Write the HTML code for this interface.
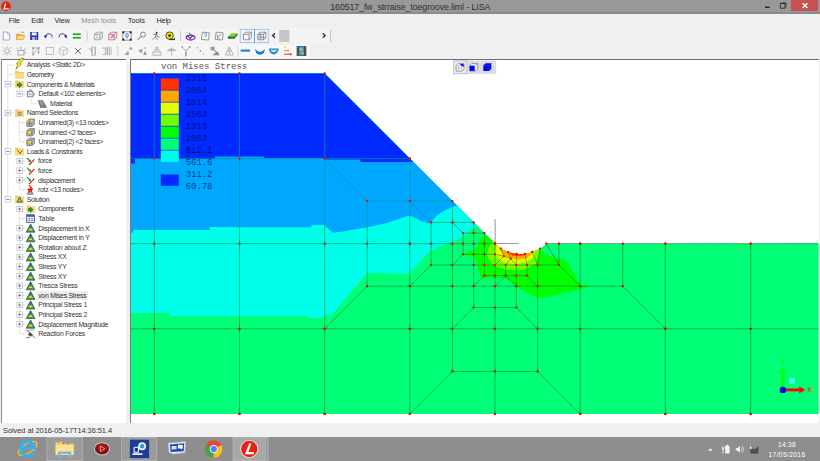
<!DOCTYPE html>
<html lang="en"><head><meta charset="utf-8"><title>160517_fw_strraise_toegroove.liml - LISA</title>
<style>
html,body{margin:0;padding:0}
body{width:820px;height:461px;overflow:hidden;position:relative;background:#f0f0f0;font-family:"Liberation Sans",sans-serif}
.t{position:absolute;white-space:pre}
.a{position:absolute}
#title{left:0;top:0;width:820px;height:13.7px;background:linear-gradient(#999 0,#999 12px,#8b8b8b 12.2px,#8b8b8b 100%)}
#close{left:791.4px;top:0;width:26.8px;height:11.2px;background:#c75050}
#tree{left:1px;top:59.4px;width:125.4px;height:363.4px;background:#fff;border-left:1px solid #8c8c8c;border-top:1px solid #6e6e6e;box-sizing:border-box}
#view{left:129.8px;top:59.2px;width:689.2px;height:363.6px;background:#fff;border-left:1px solid #7a7a7a;border-top:1px solid #6e6e6e;box-sizing:border-box}
#task{left:0;top:437px;width:820px;height:24px;background:#8e8e8e}
</style></head>
<body>
<div id="title" class="a"></div>
<div id="close" class="a"></div>
<div id="tree" class="a"></div>
<div id="view" class="a"></div>
<div id="task" class="a"></div>
<div class="a" style="left:0;top:29.3px;width:330px;height:13.8px;background:#f4f4f4;border-radius:0 2px 2px 0"></div>
<div class="a" style="left:0;top:44.2px;width:237px;height:14px;background:#f5f5f5;border-radius:0 2px 2px 0"></div>
<svg width="820" height="461" viewBox="0 0 820 461" style="position:absolute;left:0;top:0"><rect x="36.6" y="290.8" width="51" height="9.2" fill="#ececec"/></svg>
<svg width="820" height="461" viewBox="0 0 820 461" style="position:absolute;left:0;top:0"><g transform="translate(767.3 7.2)"><rect x="-2.3" y="-0.7" width="4.6" height="1.5" fill="#222"/></g>
<g transform="translate(783.0 5.5)"><rect x="-2.7" y="-1.9" width="4.6" height="4.6" fill="#999" stroke="#333" stroke-width="0.9"/><rect x="-1.6" y="-3" width="4.6" height="1.3" fill="#333"/><path d="M3 -2.4V1.6H2" stroke="#333" stroke-width="0.8" fill="none"/></g>
<g transform="translate(805.0 5.6)"><path d="M-2.4 -2.4L2.4 2.4M2.4 -2.4L-2.4 2.4" stroke="#fff" stroke-width="1.5" fill="none"/></g>
<g transform="translate(6.0 6.3)"><circle r="4.8" fill="#ee1c08"/><path d="M-0.4 -2.8L-1.9 2.6H2.8" stroke="#fff" stroke-width="1.3" fill="none"/></g>
<g transform="translate(6.4 36.0)"><path d="M-3.2 -4H1.2L3.3 -1.8V4H-3.2Z" fill="#fdfdff" stroke="#8a94b8" stroke-width="0.8"/><path d="M1.2 -4V-1.8H3.3" fill="#d8e0f4" stroke="#8a94b8" stroke-width="0.6"/></g>
<g transform="translate(20.4 36.0)"><path d="M-4.3 -2.6H-1.2L-0.2 -1.6H3V3.6H-4.3Z" fill="#e8b040"/><path d="M-4.3 3.6L-2.6 -0.6H4.6L3 3.6Z" fill="#ffd870" stroke="#c89020" stroke-width="0.5"/><path d="M0.5 -3.6Q2.8 -4.8 4 -3" stroke="#666" stroke-width="0.6" fill="none"/></g>
<g transform="translate(34.2 36.0)"><rect x="-4" y="-4" width="8" height="8" fill="#2434c0"/><rect x="-2.4" y="-3.6" width="4.8" height="3" fill="#f4f4ff"/><rect x="-2" y="1" width="4.4" height="3" fill="#c0c4d8"/><rect x="0.6" y="1.5" width="1.2" height="2" fill="#202870"/></g>
<g transform="translate(48.8 36.0)"><path d="M-3.6 1.2Q-3 -2.6 0.4 -2.4Q3.4 -2 3.6 1.4" stroke="#1a2a9a" stroke-width="0.85" fill="none"/><path d="M-4.6 -0.8L-1.4 -0.2L-3.8 2.6Z" fill="#1a2a9a"/></g>
<g transform="translate(62.5 36.0)"><path d="M3.6 1.2Q3 -2.6 -0.4 -2.4Q-3.4 -2 -3.6 1.4" stroke="#1a2a9a" stroke-width="0.85" fill="none"/><path d="M4.6 -0.8L1.4 -0.2L3.8 2.6Z" fill="#1a2a9a"/></g>
<g transform="translate(76.8 36.0)"><rect x="-4" y="-2.6" width="8" height="1.7" fill="#18a818"/><rect x="-4" y="0.9" width="8" height="1.7" fill="#18a818"/></g>
<g transform="translate(87.2 36.0)"><rect x="-0.4" y="-5" width="0.8" height="10" fill="#c4c4c4"/></g>
<g transform="translate(98.4 36.0)"><path d="M-4 -1.6L-1.6 -3.8H4V1.6L1.6 3.8H-4ZM-4 -1.6H1.6V3.8M1.6 -1.6L4 -3.8" stroke="#8a8a8a" stroke-width="0.7" fill="none"/><path d="M-1.6 -3.8V1.6H4M-1.6 1.6L-4 3.8" stroke="#a0a0a0" stroke-width="0.5" fill="none"/></g>
<g transform="translate(112.7 36.0)"><path d="M-4 -1.6L-1.6 -3.8H4V1.6L1.6 3.8H-4ZM-4 -1.6H1.6V3.8M1.6 -1.6L4 -3.8" stroke="#d05050" stroke-width="0.7" fill="none"/><path d="M-1.6 -3.8V1.6H4M-1.6 1.6L-4 3.8" stroke="#e08080" stroke-width="0.5" fill="none"/><path d="M-1.2 1.4L1 -1" stroke="#2040e0" stroke-width="1"/></g>
<g transform="translate(127.0 36.0)"><rect x="-4.1" y="-4.1" width="8.2" height="8.2" fill="#fff" stroke="#555" stroke-width="0.6"/><rect x="-4.6" y="-4.6" width="1.9" height="1.9" fill="#111"/><rect x="2.7" y="-4.6" width="1.9" height="1.9" fill="#111"/><rect x="-4.6" y="2.7" width="1.9" height="1.9" fill="#111"/><rect x="2.7" y="2.7" width="1.9" height="1.9" fill="#111"/><circle cx="0" cy="-0.8" r="1.6" fill="#c8d8ff" stroke="#4060d0" stroke-width="0.7"/><path d="M0 0.8V3" stroke="#4060d0" stroke-width="0.8"/></g>
<g transform="translate(141.8 36.0)"><circle cx="1.2" cy="-1.4" r="2.5" fill="#f8f8f8" stroke="#555" stroke-width="0.7"/><path d="M-0.6 0.4L-4 3.8" stroke="#555" stroke-width="1"/></g>
<g transform="translate(156.0 36.0)"><circle cx="0.6" cy="-3.2" r="1" fill="#333"/><path d="M-2.6 -1.4L0.4 -1.8L1.4 0.6L3.6 1.2M0.4 -1.8L-0.6 1L1.6 3.8M-0.6 1L-3.4 3.6" stroke="#444" stroke-width="0.65" fill="none"/></g>
<g transform="translate(170.0 36.0)"><circle cx="-0.4" cy="-0.4" r="3.7" fill="#f4e800" stroke="#222" stroke-width="0.8"/><circle cx="-0.4" cy="-0.4" r="1.3" fill="#222"/><path d="M-1 3.6H4.4V2" stroke="#222" stroke-width="1" fill="none"/></g>
<g transform="translate(180.6 36.0)"><rect x="-0.4" y="-5" width="0.8" height="10" fill="#c4c4c4"/></g>
<g transform="translate(190.6 36.0)"><ellipse cx="0" cy="1.6" rx="4.4" ry="2.4" fill="none" stroke="#8030b0" stroke-width="1.3"/><path d="M-3.6 -1L-0.6 2.4L2.4 -0.6" stroke="#6020a0" stroke-width="1.1" fill="none"/><path d="M-2 -3.8L1.4 -1.2L-0.4 -0.2Z" fill="#20a020"/></g>
<g transform="translate(205.3 36.0)"><path d="M-3 -3.8L4 -3.2L3.2 4L-4 3.4Z" fill="#fcfcfc" stroke="#707070" stroke-width="0.7"/><path d="M-1 -1.8Q0.4 -2.8 1.2 -1.6Q1.2 -0.4 0 0.4V1.2" stroke="#3050d0" stroke-width="0.8" fill="none"/></g>
<g transform="translate(219.2 36.0)"><path d="M-3 -3.8L4 -3.2L3.2 4L-4 3.4Z" fill="#fcfcfc" stroke="#707070" stroke-width="0.7"/><path d="M-2 1.6L0 -0.4L2.4 -1.6" stroke="#e04040" stroke-width="0.7" fill="none"/><path d="M-1.6 -2V2" stroke="#30a0d0" stroke-width="0.7"/><path d="M-2.4 2H1" stroke="#30b040" stroke-width="0.7"/></g>
<g transform="translate(232.7 36.0)"><path d="M-4.8 0.6L-1.4 -2.8H4.8L1.6 0.6Z" fill="#80d820"/><path d="M-4.8 0.6H1.6L4.8 -2.8V-0.8L1.6 2.8H-4.8Z" fill="#1c7a14"/></g>
<rect x="240.2" y="29.4" width="28.6" height="13" fill="#f2f5fa" stroke="#8ab8f4" stroke-width="0.8"/><rect x="254" y="29.4" width="0.8" height="13" fill="#3a8cf0"/>
<g transform="translate(247.4 36.0)"><path d="M-4 -1.6L-1.6 -3.8H4V1.6L1.6 3.8H-4ZM-4 -1.6H1.6V3.8M1.6 -1.6L4 -3.8" stroke="#6a6a6a" stroke-width="0.7" fill="none"/></g>
<g transform="translate(261.8 36.0)"><path d="M-4 -1.6L-1.6 -3.8H4V1.6L1.6 3.8H-4ZM-4 -1.6H1.6V3.8M1.6 -1.6L4 -3.8" stroke="#6a6a6a" stroke-width="0.7" fill="none"/><path d="M-1.6 -3.8V1.6H4M-1.6 1.6L-4 3.8M-1.2 -1.6V3.8M-4 1H1.6" stroke="#777" stroke-width="0.5" fill="none"/></g>
<rect x="269.4" y="29.6" width="60.4" height="12.8" fill="#f3f3f3"/>
<g transform="translate(273.8 35.6)"><path d="M1.2 -2.2L-1.2 0L1.2 2.2" stroke="#222" stroke-width="1.3" fill="none"/></g>
<rect x="279.1" y="30" width="10.2" height="11.9" fill="#c6c6c6"/>
<g transform="translate(324.0 35.6)"><path d="M-1.2 -2.2L1.2 0L-1.2 2.2" stroke="#333" stroke-width="1.3" fill="none"/></g>
<g transform="translate(330.4 36.0)"><rect x="-0.4" y="-6" width="0.8" height="12" fill="#bdbdbd"/></g>
<g transform="translate(7.0 51.0)"><path d="M-4 -4L4 4M4 -4L-4 4M0 -4.6V4.6M-4.6 0H4.6" stroke="#9a9a9a" stroke-width="0.7"/><circle r="1.3" fill="#f0f0f0"/></g>
<g transform="translate(21.6 51.0)"><rect x="-3.6" y="-0.6" width="6" height="4.6" fill="none" stroke="#9a9a9a" stroke-width="0.8"/><path d="M-0.6 -1V-4.6M2.6 -1L4.6 -3.4M-3.6 -1L-4.6 -3.4M3 1.6H4.8" stroke="#9a9a9a" stroke-width="0.7"/></g>
<g transform="translate(35.8 51.0)"><path d="M-2.8 -3V3.4M2.8 -3V1M-2.8 -3H2.8M2.8 -3L-2.4 3" stroke="#9a9a9a" stroke-width="0.7" fill="none"/><circle cx="-2.8" cy="-3" r="1" fill="#9a9a9a"/><circle cx="2.8" cy="-3" r="1" fill="#9a9a9a"/><circle cx="-2.8" cy="3.4" r="1" fill="#9a9a9a"/><circle cx="2.8" cy="1.6" r="1" fill="#9a9a9a"/></g>
<g transform="translate(49.8 51.0)"><rect x="-3.6" y="-3.6" width="7.2" height="7.2" fill="none" stroke="#b4b4b4" stroke-width="0.8"/></g>
<g transform="translate(63.4 51.0)"><path d="M0 -4.4L4 -2.2V2.2L0 4.4L-4 2.2V-2.2ZM-4 -2.2L0 0L4 -2.2M0 0V4.4" stroke="#b0b0b0" stroke-width="0.7" fill="none"/></g>
<g transform="translate(78.0 51.0)"><path d="M-2.8 -2.8L2.8 2.8M2.8 -2.8L-2.8 2.8" stroke="#606060" stroke-width="0.9"/></g>
<g transform="translate(92.6 51.0)"><path d="M-4 -3L-0.6 0.4M-0.6 -4V4.4M2.6 -4V4.4" stroke="#9a9a9a" stroke-width="0.8"/><rect x="-0.6" y="-4" width="3.2" height="8.4" fill="none" stroke="#a8a8a8" stroke-width="0.6"/></g>
<g transform="translate(107.0 51.0)"><path d="M-4.4 -3H-1.4V3.6H-4" stroke="#9a9a9a" stroke-width="0.8" fill="none"/><rect x="-0.2" y="-4.2" width="1.4" height="8.4" fill="#a8a8a8"/><rect x="2" y="-4.2" width="1.2" height="8.4" fill="#b8b8b8"/><rect x="3.8" y="-4.2" width="0.9" height="8.4" fill="#c4c4c4"/></g>
<g transform="translate(117.8 51.0)"><rect x="-0.4" y="-5" width="0.8" height="10" fill="#c4c4c4"/></g>
<g transform="translate(128.3 51.0)"><path d="M-4 4L0 -0.6L0.6 4Z" fill="#a0a0a0"/><path d="M0.4 -1.6L2.6 -4.6L4.4 -1.6Z" fill="#9a9a9a"/></g>
<g transform="translate(142.6 51.0)"><path d="M-4.4 -0.6L0 -2.6L-1 2.4Z" fill="#a0a0a0"/><path d="M0.6 4L2.4 -0.6L4.2 4Z" fill="#9a9a9a"/><rect x="2" y="-4" width="0.9" height="2" fill="#9a9a9a"/></g>
<g transform="translate(157.0 51.0)"><path d="M-4 1H4V4.2H-4ZM-2 1V-1.4H2V1M-0.8 -1.4V-4H0.8V-1.4" stroke="#a4a4a4" stroke-width="0.8" fill="none"/></g>
<g transform="translate(171.6 51.0)"><path d="M-4.6 -0.4Q0 -4.6 4.6 -0.4Q0 -1.6 -4.6 -0.4Z" fill="#b0b0b0"/><path d="M0 -3.4V4.4M-4.6 -0.4H4.6" stroke="#a8a8a8" stroke-width="0.7"/></g>
<g transform="translate(186.0 51.0)"><path d="M-3.8 -4L0 0L3.8 -4M0 0V4.4" stroke="#9a9a9a" stroke-width="0.8" fill="none"/><circle cx="-3.8" cy="-4" r="0.9" fill="#9a9a9a"/><circle cx="3.8" cy="-4" r="0.9" fill="#9a9a9a"/><circle cx="0" cy="2.2" r="0.9" fill="#9a9a9a"/><circle cx="0" cy="4.4" r="0.9" fill="#9a9a9a"/></g>
<g transform="translate(200.4 51.0)"><circle cx="-3" cy="-3.2" r="0.8" fill="#a0a0a0"/><circle cx="0" cy="0" r="0.9" fill="#a0a0a0"/><circle cx="3" cy="3" r="0.8" fill="#b0b0b0"/><circle cx="-0.4" cy="-3" r="0.5" fill="#c0c0c0"/></g>
<g transform="translate(215.0 51.0)"><rect x="-4.4" y="-4.2" width="4" height="3.6" fill="#9a9a9a"/><path d="M-2 -2L2 2" stroke="#777" stroke-width="1"/><path d="M-2.6 4.2L2.6 0L4.6 4.2Z" fill="#8a8a8a"/></g>
<g transform="translate(229.3 51.0)"><path d="M0 -4.2L4 4H-4ZM-2 0H2M0 -4.2V4" stroke="#a0a0a0" stroke-width="0.7" fill="none"/></g>
<rect x="238.4" y="44.4" width="71.6" height="14" rx="1.5" fill="#f7f7f7"/><rect x="237.6" y="46" width="0.8" height="10" fill="#d0d0d0"/>
<g transform="translate(245.3 50.6)"><rect x="-4.7" y="-1.1" width="9.4" height="2.2" fill="#2088d0"/></g>
<g transform="translate(260.0 51.0)"><path d="M-4.8 -2Q0 3.8 4.8 -2Q4.8 3.4 0 3.8Q-4.8 3.4 -4.8 -2Z" fill="#1878c8"/></g>
<g transform="translate(273.8 51.0)"><path d="M-4.8 -2.4H4.8Q4.4 3 0 3.4Q-4.4 3 -4.8 -2.4Z" fill="#1880d0"/><path d="M-3.4 -1.2H3.4Q2.6 1.4 0 1.5Q-2.6 1.4 -3.4 -1.2Z" fill="#b8e8b0"/></g>
<g transform="translate(287.4 51.0)"><circle cx="-2.4" cy="-3.4" r="1.1" fill="#f8e020"/><path d="M-3.6 -0.4H0.6" stroke="#f08020" stroke-width="0.9"/><path d="M0.2 -1.6L2.2 -0.4L0.2 0.8Z" fill="#f08020"/><path d="M-3.6 3.2H3" stroke="#e01818" stroke-width="0.9"/><path d="M2.6 2L4.8 3.2L2.6 4.4Z" fill="#e01818"/></g>
<g transform="translate(301.5 51.0)"><rect x="-4.8" y="-4.8" width="9.6" height="9.6" fill="#2a2a2a"/><rect x="-2.8" y="-4.4" width="5.6" height="8.8" fill="#28a0e8"/><circle cx="-0.6" cy="-1.6" r="1.4" fill="#f8b820"/><circle cx="0.8" cy="2.2" r="1.4" fill="#f0a018"/><path d="M-4 -3.8V4M4 -3.8V4" stroke="#aaa" stroke-width="0.8" stroke-dasharray="1 1"/></g>
<rect x="453.2" y="60.4" width="43" height="13.6" rx="0.8" fill="#dddddd"/><rect x="453.7" y="60.9" width="13.2" height="12.8" fill="#ecebe8" stroke="#9cc0f4" stroke-width="0.8"/>
<g transform="translate(460.1 67.3)"><path d="M-4 -1.6L-1.8 -3.8H4V1.6L1.8 3.8H-4Z" fill="#fafafa" stroke="#7a7a7a" stroke-width="0.7"/><path d="M-4 -1.6H1.8V3.8M1.8 -1.6L4 -3.8M-1.2 -1.6V3.8M-4 1H1.8" stroke="#a0a0a0" stroke-width="0.5" fill="none"/><path d="M-0.4 -3.4H3.6V-0.4L1.6 -1.4Z" fill="#1010f0"/></g>
<g transform="translate(473.7 67.3)"><path d="M-4 -1.6L-1.8 -3.8H4V1.6L1.8 3.8H-4Z" fill="#f4f4f4" stroke="#6a6a6a" stroke-width="0.6"/><rect x="-4" y="-1.6" width="5" height="5.2" fill="#0000ff"/><path d="M1.2 -1.6L4 -3.8" stroke="#6a6a6a" stroke-width="0.5"/></g>
<g transform="translate(487.3 67.1)"><path d="M-4 -1.6L-1.8 -3.8H4V1.6L1.8 3.8H-4Z" fill="#0808f0"/><path d="M-4 -1.6H1.8V3.8M1.8 -1.6L4 -3.8" stroke="#2838c0" stroke-width="0.6" fill="none"/></g>
<path d="M7.8 65.0V199.4M7.8 65.0H15M7.8 74.6H15M7.8 84.2H15M7.8 113.0H15M7.8 151.39999999999998H15M7.8 199.4H15M19.6 89.8V93.8M19.6 93.8H27M31.5 99.4V103.4H37M19.6 118.6V141.8M19.6 122.6H26M19.6 132.2H26M19.6 141.8H26M19.6 157.0V189.8M19.6 161.0H26M19.6 170.6H26M19.6 180.2H26M19.6 189.8H26M19.6 205.0V333.8M19.6 209.0H26M19.6 218.6H26M19.6 228.2H26M19.6 237.79999999999998H26M19.6 247.4H26M19.6 257.0H26M19.6 266.6H26M19.6 276.2H26M19.6 285.79999999999995H26M19.6 295.4H26M19.6 305.0H26M19.6 314.6H26M19.6 324.2H26M19.6 333.8H26" stroke="#a8a8a8" stroke-width="0.6" stroke-dasharray="0.6 0.6" fill="none"/>
<g transform="translate(7.8 84.2)"><rect x="-2.7" y="-2.7" width="5.4" height="5.4" fill="#fff" stroke="#a8aeb6" stroke-width="0.6"/><path d="M-1.5 0H1.5" stroke="#556" stroke-width="0.7"/></g>
<g transform="translate(7.8 113.0)"><rect x="-2.7" y="-2.7" width="5.4" height="5.4" fill="#fff" stroke="#a8aeb6" stroke-width="0.6"/><path d="M-1.5 0H1.5" stroke="#556" stroke-width="0.7"/></g>
<g transform="translate(7.8 151.4)"><rect x="-2.7" y="-2.7" width="5.4" height="5.4" fill="#fff" stroke="#a8aeb6" stroke-width="0.6"/><path d="M-1.5 0H1.5" stroke="#556" stroke-width="0.7"/></g>
<g transform="translate(7.8 199.4)"><rect x="-2.7" y="-2.7" width="5.4" height="5.4" fill="#fff" stroke="#a8aeb6" stroke-width="0.6"/><path d="M-1.5 0H1.5" stroke="#556" stroke-width="0.7"/></g>
<g transform="translate(19.6 93.8)"><rect x="-2.7" y="-2.7" width="5.4" height="5.4" fill="#fff" stroke="#a8aeb6" stroke-width="0.6"/><path d="M-1.5 0H1.5" stroke="#556" stroke-width="0.7"/></g>
<g transform="translate(19.6 161.0)"><rect x="-2.7" y="-2.7" width="5.4" height="5.4" fill="#fff" stroke="#a8aeb6" stroke-width="0.6"/><path d="M-1.5 0H1.5" stroke="#556" stroke-width="0.7"/><path d="M0 -1.5V1.5" stroke="#556" stroke-width="0.7"/></g>
<g transform="translate(19.6 170.6)"><rect x="-2.7" y="-2.7" width="5.4" height="5.4" fill="#fff" stroke="#a8aeb6" stroke-width="0.6"/><path d="M-1.5 0H1.5" stroke="#556" stroke-width="0.7"/><path d="M0 -1.5V1.5" stroke="#556" stroke-width="0.7"/></g>
<g transform="translate(19.6 180.2)"><rect x="-2.7" y="-2.7" width="5.4" height="5.4" fill="#fff" stroke="#a8aeb6" stroke-width="0.6"/><path d="M-1.5 0H1.5" stroke="#556" stroke-width="0.7"/><path d="M0 -1.5V1.5" stroke="#556" stroke-width="0.7"/></g>
<g transform="translate(19.6 209.0)"><rect x="-2.7" y="-2.7" width="5.4" height="5.4" fill="#fff" stroke="#a8aeb6" stroke-width="0.6"/><path d="M-1.5 0H1.5" stroke="#556" stroke-width="0.7"/><path d="M0 -1.5V1.5" stroke="#556" stroke-width="0.7"/></g>
<g transform="translate(19.6 228.2)"><rect x="-2.7" y="-2.7" width="5.4" height="5.4" fill="#fff" stroke="#a8aeb6" stroke-width="0.6"/><path d="M-1.5 0H1.5" stroke="#556" stroke-width="0.7"/><path d="M0 -1.5V1.5" stroke="#556" stroke-width="0.7"/></g>
<g transform="translate(19.6 237.8)"><rect x="-2.7" y="-2.7" width="5.4" height="5.4" fill="#fff" stroke="#a8aeb6" stroke-width="0.6"/><path d="M-1.5 0H1.5" stroke="#556" stroke-width="0.7"/><path d="M0 -1.5V1.5" stroke="#556" stroke-width="0.7"/></g>
<g transform="translate(19.6 247.4)"><rect x="-2.7" y="-2.7" width="5.4" height="5.4" fill="#fff" stroke="#a8aeb6" stroke-width="0.6"/><path d="M-1.5 0H1.5" stroke="#556" stroke-width="0.7"/><path d="M0 -1.5V1.5" stroke="#556" stroke-width="0.7"/></g>
<g transform="translate(19.6 257.0)"><rect x="-2.7" y="-2.7" width="5.4" height="5.4" fill="#fff" stroke="#a8aeb6" stroke-width="0.6"/><path d="M-1.5 0H1.5" stroke="#556" stroke-width="0.7"/><path d="M0 -1.5V1.5" stroke="#556" stroke-width="0.7"/></g>
<g transform="translate(19.6 266.6)"><rect x="-2.7" y="-2.7" width="5.4" height="5.4" fill="#fff" stroke="#a8aeb6" stroke-width="0.6"/><path d="M-1.5 0H1.5" stroke="#556" stroke-width="0.7"/><path d="M0 -1.5V1.5" stroke="#556" stroke-width="0.7"/></g>
<g transform="translate(19.6 276.2)"><rect x="-2.7" y="-2.7" width="5.4" height="5.4" fill="#fff" stroke="#a8aeb6" stroke-width="0.6"/><path d="M-1.5 0H1.5" stroke="#556" stroke-width="0.7"/><path d="M0 -1.5V1.5" stroke="#556" stroke-width="0.7"/></g>
<g transform="translate(19.6 285.8)"><rect x="-2.7" y="-2.7" width="5.4" height="5.4" fill="#fff" stroke="#a8aeb6" stroke-width="0.6"/><path d="M-1.5 0H1.5" stroke="#556" stroke-width="0.7"/><path d="M0 -1.5V1.5" stroke="#556" stroke-width="0.7"/></g>
<g transform="translate(19.6 295.4)"><rect x="-2.7" y="-2.7" width="5.4" height="5.4" fill="#fff" stroke="#a8aeb6" stroke-width="0.6"/><path d="M-1.5 0H1.5" stroke="#556" stroke-width="0.7"/><path d="M0 -1.5V1.5" stroke="#556" stroke-width="0.7"/></g>
<g transform="translate(19.6 305.0)"><rect x="-2.7" y="-2.7" width="5.4" height="5.4" fill="#fff" stroke="#a8aeb6" stroke-width="0.6"/><path d="M-1.5 0H1.5" stroke="#556" stroke-width="0.7"/><path d="M0 -1.5V1.5" stroke="#556" stroke-width="0.7"/></g>
<g transform="translate(19.6 314.6)"><rect x="-2.7" y="-2.7" width="5.4" height="5.4" fill="#fff" stroke="#a8aeb6" stroke-width="0.6"/><path d="M-1.5 0H1.5" stroke="#556" stroke-width="0.7"/><path d="M0 -1.5V1.5" stroke="#556" stroke-width="0.7"/></g>
<g transform="translate(19.6 324.2)"><rect x="-2.7" y="-2.7" width="5.4" height="5.4" fill="#fff" stroke="#a8aeb6" stroke-width="0.6"/><path d="M-1.5 0H1.5" stroke="#556" stroke-width="0.7"/><path d="M0 -1.5V1.5" stroke="#556" stroke-width="0.7"/></g>
<g transform="translate(19.5 63.8)"><path d="M4.2 -5.4L0.4 0.4H1.6L-3.6 5.6L-1.8 0H-3L1.4 -5.4Z" fill="#f8f400" stroke="#4a4a10" stroke-width="0.5"/></g>
<g transform="translate(19.6 74.6)"><path d="M-4.4 -3.6H-1.4L-0.6 -2.6H4.4V3.8H-4.4Z" fill="#f4c458"/><rect x="-4.4" y="-1.8" width="8.8" height="5.6" fill="#ffd880"/></g>
<g transform="translate(19.6 84.2)"><path d="M-4.4 -3.6H-1.4L-0.6 -2.6H4.4V3.8H-4.4Z" fill="#f4c458"/><rect x="-4.4" y="-1.8" width="8.8" height="5.6" fill="#ffd880"/><path d="M-2.6 1.8V-0.4H-0.4V-2L2.8 0.8L-0.4 3.4V1.8Z" fill="#18a018" stroke="#0a600a" stroke-width="0.4"/></g>
<g transform="translate(31.0 93.8)"><rect x="-3.6" y="-2.4" width="5.6" height="5.4" fill="#e8e8e8" stroke="#666" stroke-width="0.7"/><rect x="-1.8" y="-4" width="2.4" height="1.8" fill="#ccc" stroke="#666" stroke-width="0.5"/><path d="M2 -1L4 0.4L2 1.8M-2.4 0.4H0.6" stroke="#666" stroke-width="0.6" fill="none"/></g>
<g transform="translate(42.0 103.4)"><path d="M-4.4 -3.2H0.8L4.6 3.4H-2Z" fill="#6a6a78"/><path d="M-2 3.4H4.6V4.2H-2Z" fill="#333"/><path d="M-3.2 -2.4H0.2L2.6 2H-1Z" fill="#9a9aac"/></g>
<g transform="translate(19.6 113.0)"><path d="M-4.4 -3.6H-1.4L-0.6 -2.6H4.4V3.8H-4.4Z" fill="#f4c458"/><rect x="-4.4" y="-1.8" width="8.8" height="5.6" fill="#ffd880"/><rect x="-2" y="-1.2" width="4" height="3.8" fill="#8a8a8a"/><rect x="-1" y="-0.2" width="2" height="1.8" fill="#e8d040"/></g>
<g transform="translate(30.6 122.6)"><path d="M-3.8 -1.4L-1.4 -3.6H3.8V1.6L1.4 3.8H-3.8Z" fill="#b8b8b8" stroke="#555" stroke-width="0.6"/><path d="M-3.8 -1.4H1.4V3.8M1.4 -1.4L3.8 -3.6M-1.2 -1.4V3.8M-3.8 1.2H1.4" stroke="#555" stroke-width="0.5" fill="none"/><circle cx="-3.6" cy="-1.6" r="1.1" fill="#f8e800"/><circle cx="1.2" cy="-1.8" r="1.1" fill="#f8e800"/></g>
<g transform="translate(30.6 132.2)"><path d="M-3.8 -1.4L-1.4 -3.6H3.8V1.6L1.4 3.8H-3.8Z" fill="#b8b8b8" stroke="#555" stroke-width="0.6"/><path d="M-3.8 -1.4H1.4V3.8M1.4 -1.4L3.8 -3.6M-1.2 -1.4V3.8M-3.8 1.2H1.4" stroke="#555" stroke-width="0.5" fill="none"/><rect x="-2.6" y="-1" width="3" height="2.6" fill="#f0e020"/></g>
<g transform="translate(30.6 141.8)"><path d="M-3.8 -1.4L-1.4 -3.6H3.8V1.6L1.4 3.8H-3.8Z" fill="#b8b8b8" stroke="#555" stroke-width="0.6"/><path d="M-3.8 -1.4H1.4V3.8M1.4 -1.4L3.8 -3.6M-1.2 -1.4V3.8M-3.8 1.2H1.4" stroke="#555" stroke-width="0.5" fill="none"/><rect x="-2.6" y="-1" width="3" height="2.6" fill="#f0e020"/></g>
<g transform="translate(19.6 151.4)"><path d="M-4.4 -3.6H-1.4L-0.6 -2.6H4.4V3.8H-4.4Z" fill="#f4c458"/><rect x="-4.4" y="-1.8" width="8.8" height="5.6" fill="#ffd880"/><path d="M-2.4 -1.2L0 1.4" stroke="#18a018" stroke-width="1"/><path d="M0 2.6L2.6 -0.8" stroke="#e01010" stroke-width="1"/></g>
<g transform="translate(30.6 161.0)"><path d="M-3.6 -3L-0.6 0" stroke="#109010" stroke-width="1.1"/><path d="M-2.4 0.6L0.4 1.2L-0.2 -1.6Z" fill="#109010"/><path d="M-1.6 4L3.8 -1.6" stroke="#e81010" stroke-width="1.1"/></g>
<g transform="translate(30.6 170.6)"><path d="M-3.6 -3L-0.6 0" stroke="#109010" stroke-width="1.1"/><path d="M-2.4 0.6L0.4 1.2L-0.2 -1.6Z" fill="#109010"/><path d="M-1.6 4L3.8 -1.6" stroke="#e81010" stroke-width="1.1"/></g>
<g transform="translate(30.6 180.2)"><path d="M-3.6 -3L-0.6 0" stroke="#109010" stroke-width="1.1"/><path d="M-2.4 0.6L0.4 1.2L-0.2 -1.6Z" fill="#109010"/><path d="M-1.6 4L3.8 -1.6" stroke="#e81010" stroke-width="1.1"/></g>
<g transform="translate(30.2 189.8)"><path d="M-1 -4.6L2 -1" stroke="#e81010" stroke-width="1.1"/><path d="M0 -2.8L1 -0.8L3.4 -0.8L1.6 0.8L2.4 3.2L0 1.8L-2.4 3.2L-1.6 0.8L-3.4 -0.8L-1 -0.8Z" fill="#e81010"/><path d="M-3.4 4.2H3.4" stroke="#222" stroke-width="0.8"/><path d="M-2.6 2.8H2.6" stroke="#555" stroke-width="0.6"/></g>
<g transform="translate(19.6 199.4)"><path d="M-4.4 -3.6H-1.4L-0.6 -2.6H4.4V3.8H-4.4Z" fill="#f4c458"/><rect x="-4.4" y="-1.8" width="8.8" height="5.6" fill="#ffd880"/><path d="M0 -2.6L2.8 2.8H-2.8Z" fill="#40b040" stroke="#334" stroke-width="0.5"/><path d="M0 -0.6L1.2 1.8H-1.2Z" fill="#f0e020"/></g>
<g transform="translate(30.6 209.0)"><path d="M-4.0 -3.6H-1.4L-0.6 -2.6H4.0V3.8H-4.0Z" fill="#f4c458"/><rect x="-4.0" y="-1.8" width="8.8" height="5.6" fill="#ffd880"/><path d="M-2.6 1.8V-0.4H-0.4V-2L2.8 0.8L-0.4 3.4V1.8Z" fill="#18a018" stroke="#0a600a" stroke-width="0.4"/></g>
<g transform="translate(30.6 218.6)"><rect x="-4" y="-3.8" width="8" height="7.6" fill="#fff" stroke="#283890" stroke-width="0.7"/><rect x="-4" y="-3.8" width="8" height="2" fill="#4058b8"/><path d="M-1.4 -3.8V3.8M1.4 -3.8V3.8M-4 0.2H4M-4 2H4" stroke="#5068b8" stroke-width="0.5"/></g>
<g transform="translate(30.6 228.2)"><path d="M0 -4.2L4.4 4H-4.4Z" fill="#28b040" stroke="#203040" stroke-width="0.6"/><path d="M0 -3.2L1.4 -0.6H-1.4Z" fill="#3050e0"/><path d="M-1 0.6H1L2 2.4H-2Z" fill="#f0e020"/><path d="M-1.4 2.8H1.4L1.8 3.6H-1.8Z" fill="#e03020"/></g>
<g transform="translate(30.6 237.8)"><path d="M0 -4.2L4.4 4H-4.4Z" fill="#28b040" stroke="#203040" stroke-width="0.6"/><path d="M0 -3.2L1.4 -0.6H-1.4Z" fill="#3050e0"/><path d="M-1 0.6H1L2 2.4H-2Z" fill="#f0e020"/><path d="M-1.4 2.8H1.4L1.8 3.6H-1.8Z" fill="#e03020"/></g>
<g transform="translate(30.6 247.4)"><path d="M0 -4.2L4.4 4H-4.4Z" fill="#28b040" stroke="#203040" stroke-width="0.6"/><path d="M0 -3.2L1.4 -0.6H-1.4Z" fill="#3050e0"/><path d="M-1 0.6H1L2 2.4H-2Z" fill="#f0e020"/><path d="M-1.4 2.8H1.4L1.8 3.6H-1.8Z" fill="#e03020"/></g>
<g transform="translate(30.6 257.0)"><path d="M0 -4.2L4.4 4H-4.4Z" fill="#28b040" stroke="#203040" stroke-width="0.6"/><path d="M0 -3.2L1.4 -0.6H-1.4Z" fill="#3050e0"/><path d="M-1 0.6H1L2 2.4H-2Z" fill="#f0e020"/><path d="M-1.4 2.8H1.4L1.8 3.6H-1.8Z" fill="#e03020"/></g>
<g transform="translate(30.6 266.6)"><path d="M0 -4.2L4.4 4H-4.4Z" fill="#28b040" stroke="#203040" stroke-width="0.6"/><path d="M0 -3.2L1.4 -0.6H-1.4Z" fill="#3050e0"/><path d="M-1 0.6H1L2 2.4H-2Z" fill="#f0e020"/><path d="M-1.4 2.8H1.4L1.8 3.6H-1.8Z" fill="#e03020"/></g>
<g transform="translate(30.6 276.2)"><path d="M0 -4.2L4.4 4H-4.4Z" fill="#28b040" stroke="#203040" stroke-width="0.6"/><path d="M0 -3.2L1.4 -0.6H-1.4Z" fill="#3050e0"/><path d="M-1 0.6H1L2 2.4H-2Z" fill="#f0e020"/><path d="M-1.4 2.8H1.4L1.8 3.6H-1.8Z" fill="#e03020"/></g>
<g transform="translate(30.6 285.8)"><path d="M0 -4.2L4.4 4H-4.4Z" fill="#28b040" stroke="#203040" stroke-width="0.6"/><path d="M0 -3.2L1.4 -0.6H-1.4Z" fill="#3050e0"/><path d="M-1 0.6H1L2 2.4H-2Z" fill="#f0e020"/><path d="M-1.4 2.8H1.4L1.8 3.6H-1.8Z" fill="#e03020"/></g>
<g transform="translate(30.6 295.4)"><path d="M0 -4.2L4.4 4H-4.4Z" fill="#28b040" stroke="#203040" stroke-width="0.6"/><path d="M0 -3.2L1.4 -0.6H-1.4Z" fill="#3050e0"/><path d="M-1 0.6H1L2 2.4H-2Z" fill="#f0e020"/><path d="M-1.4 2.8H1.4L1.8 3.6H-1.8Z" fill="#e03020"/></g>
<g transform="translate(30.6 305.0)"><path d="M0 -4.2L4.4 4H-4.4Z" fill="#28b040" stroke="#203040" stroke-width="0.6"/><path d="M0 -3.2L1.4 -0.6H-1.4Z" fill="#3050e0"/><path d="M-1 0.6H1L2 2.4H-2Z" fill="#f0e020"/><path d="M-1.4 2.8H1.4L1.8 3.6H-1.8Z" fill="#e03020"/></g>
<g transform="translate(30.6 314.6)"><path d="M0 -4.2L4.4 4H-4.4Z" fill="#28b040" stroke="#203040" stroke-width="0.6"/><path d="M0 -3.2L1.4 -0.6H-1.4Z" fill="#3050e0"/><path d="M-1 0.6H1L2 2.4H-2Z" fill="#f0e020"/><path d="M-1.4 2.8H1.4L1.8 3.6H-1.8Z" fill="#e03020"/></g>
<g transform="translate(30.6 324.2)"><path d="M0 -4.2L4.4 4H-4.4Z" fill="#28b040" stroke="#203040" stroke-width="0.6"/><path d="M0 -3.2L1.4 -0.6H-1.4Z" fill="#3050e0"/><path d="M-1 0.6H1L2 2.4H-2Z" fill="#f0e020"/><path d="M-1.4 2.8H1.4L1.8 3.6H-1.8Z" fill="#e03020"/></g>
<g transform="translate(30.6 333.8)"><path d="M-4.4 -4L4.6 4.4" stroke="#e02020" stroke-width="0.8"/><path d="M-3.6 -3.2L3.4 -4" stroke="#30a0e0" stroke-width="0.7"/><path d="M-1 -2L2.4 1L0 3L-2.6 1.2Z" fill="#555"/><path d="M-4.4 3.8H-1" stroke="#333" stroke-width="0.7"/></g>
<rect x="47" y="437.6" width="35.3" height="23" fill="#9a9a9a" stroke="#b4b4b4" stroke-width="0.8"/>
<rect x="121.6" y="437.6" width="35.1" height="23" fill="#9a9a9a" stroke="#b4b4b4" stroke-width="0.8"/>
<rect x="233" y="437.6" width="35.0" height="23" fill="#a8a8a8" stroke="#b4b4b4" stroke-width="0.8"/>
<rect x="265.6" y="437.6" width="2.4" height="23" fill="#9a9a9a" stroke="#b8b8b8" stroke-width="0.5"/>
<g transform="translate(27.6 448.4)"><g transform="scale(1.12)"><ellipse cx="0" cy="0" rx="9.4" ry="4.2" transform="rotate(-32)" fill="none" stroke="#f0b828" stroke-width="1.5"/><path d="M5.6 2.4A6 6.4 0 1 1 5.9 -0.6H-5" stroke="#38b0f0" stroke-width="2.8" fill="none"/></g></g>
<g transform="translate(64.6 449.4)"><path d="M-9 -7.6H-2L-0.6 -6H9V5H-9Z" fill="#f4cc60"/><rect x="-9" y="-4.4" width="18" height="10" fill="#fbe290"/><path d="M-6.6 8V2.2H6.6V8H4V4.6H-4V8Z" fill="#78b8e8"/><circle cx="-6.4" cy="-7" r="0.8" fill="#30c030"/><circle cx="-1.6" cy="-6.2" r="0.8" fill="#e03030"/><circle cx="3.4" cy="-5.6" r="0.8" fill="#3080e0"/></g>
<g transform="translate(102.0 448.8)"><ellipse rx="8" ry="6.6" fill="#c8c8c8"/><ellipse rx="7" ry="5.6" fill="#801010"/><ellipse cx="0" cy="-1" rx="5.6" ry="3.6" fill="#a01818"/><path d="M-1.6 -2.8L2.8 0L-1.6 2.8Z" fill="none" stroke="#f0a0a0" stroke-width="0.9"/></g>
<g transform="translate(139.5 448.9)"><rect x="-9.6" y="-9.2" width="19.2" height="18.4" fill="#1c3c9c"/><circle cx="2.6" cy="-2.6" r="4" fill="#e8f0ff"/><circle cx="2.6" cy="-2.6" r="2.2" fill="#28a0c8"/><path d="M-5.4 -1.6H-1V3.4H-5.4Z" fill="none" stroke="#fff" stroke-width="1"/><rect x="-7" y="4.4" width="10" height="1.6" fill="#fff"/></g>
<g transform="translate(177.2 448.6)"><g transform="scale(1.12)"><path d="M-8.2 -5L7.6 -6.4L7 3.6L-3.6 5L-7.4 3.4Z" fill="#e8eef8" stroke="#a8a8a8" stroke-width="0.6"/><path d="M-6.6 -3.6L6.2 -4.8L5.8 2.4L-5.8 3Z" fill="#2048a8"/><path d="M-5 -2.4H-0.6V0.6H-3.4L-4.4 1.8V0.6H-5Z" fill="#dde6f8"/><path d="M0.6 -3.4H5V-0.2H4.2V1L3 -0.2H0.6Z" fill="#f4f7ff"/></g></g>
<g transform="translate(213.8 449.0)"><circle r="8.6" fill="#e8443a"/><path d="M0 0L-7.45 -4.3A8.6 8.6 0 0 0 0 8.6Z" fill="#38a852" transform="rotate(0)"/><path d="M0 0L7.45 -4.3A8.6 8.6 0 0 1 -0.2 8.6Z" fill="#f8c020"/><path d="M-7.45 -4.3A8.6 8.6 0 0 1 7.45 -4.3L0 0Z" fill="#e8443a"/><circle r="4" fill="#f4f4f4"/><circle r="3.1" fill="#4888f0"/></g>
<g transform="translate(249.3 449.0)"><circle r="9" fill="#f0f0f0"/><circle r="8.2" fill="#e82410"/><path d="M1 -5.6L-2.6 4.2H4.6" stroke="#fff" stroke-width="2.3" fill="none"/></g>
<g transform="translate(710.4 449.6)"><path d="M-2.2 1.2L0 -1.4L2.2 1.2Z" fill="#f4f4f4"/></g>
<g transform="translate(725.6 449.4)"><rect x="-0.4" y="-3.6" width="4.4" height="7.8" rx="0.8" fill="#f4f4f4"/><path d="M-3.4 -3V-0.6H-1.6V-3M-2.5 -0.6V4.2" stroke="#f4f4f4" stroke-width="0.9" fill="none"/><rect x="1" y="-4.6" width="1.6" height="1.2" fill="#f4f4f4"/></g>
<g transform="translate(739.4 449.4)"><path d="M-3.6 -1.2H-2L0.4 -3.4V3.4L-2 1.2H-3.6Z" fill="#f8f8f8"/><path d="M1.8 -2Q3 0 1.8 2M3.2 -3.2Q5 0 3.2 3.2" stroke="#e8e8e8" stroke-width="0.7" fill="none"/></g>
<g transform="translate(754.0 449.4)"><path d="M-3.6 3.6H4.4V-3.4L1.6 -0.6H-3.6Z" fill="#505050"/><path d="M-4 -3.6L-2 -1.2L-4 -0.4Z" fill="#f4f4f4"/><path d="M-3.6 3.6H4.4" stroke="#3a3a3a" stroke-width="0.8"/></g></svg>
<svg id="vp" width="820" height="461" viewBox="0 0 820 461" style="position:absolute;left:0;top:0" shape-rendering="auto">
<defs><clipPath id="bd"><polygon points="131.0,73.7 324.7,73.7 495.2,243.7 501.0,248.7 508.3,252.3 516.9,254.1 524.9,254.1 532.4,252.1 540.2,248.7 546.4,243.7 818.7,243.3 818.7,413.9 131.0,413.9"/></clipPath></defs>
<g clip-path="url(#bd)">
<rect x="120" y="60" width="700" height="360" fill="#00ff76"/>
<polygon points="130.0,312.9 170.0,312.9 170.0,316.0 308.4,316.0 308.4,318.0 324.5,318.0 324.5,315.2 331.4,315.2 367.2,273.0 409.6,273.4 430.5,250.4 452.4,241.7 462.8,237.0 468.3,232.7 473.2,227.8 478.0,224.0 500.0,60.0 130.0,60.0" fill="#00ffea"/>
<polygon points="130.0,232.5 133.0,232.5 133.0,230.0 210.0,230.0 210.0,227.0 311.3,227.3 311.3,225.0 324.5,225.0 332.8,232.8 342.7,231.5 366.8,227.3 386.6,223.0 409.6,215.2 420.0,220.6 428.0,223.5 431.0,222.0 436.6,215.6 443.9,210.7 452.4,207.0 459.0,205.0 480.0,60.0 130.0,60.0" fill="#00a7ff"/>
<polygon points="130.0,163.4 135.0,163.4 135.0,159.0 215.0,159.0 215.0,156.5 263.8,156.5 263.8,158.0 324.5,158.0 324.5,159.5 360.4,159.5 360.4,162.0 416.0,162.0 430.0,60.0 130.0,60.0" fill="#002aff"/>
<polygon points="489.0,233.0 480.5,238.8 478.0,246.0 474.0,249.4 463.0,254.3 474.0,257.5 476.6,262.8 479.0,272.6 480.9,278.0 494.9,278.7 504.6,278.0 515.6,286.3 538.0,298.6 559.0,294.4 580.2,288.9 591.6,286.0 580.3,285.0 574.4,274.6 568.5,264.2 564.8,259.5 558.4,258.6 547.4,255.0 540.0,250.3 538.0,240.0 500.0,238.0" fill="#00ff04"/>
<polygon points="493.7,240.0 488.8,247.0 487.0,254.3 488.8,260.4 494.9,265.9 505.9,269.5 518.0,270.8 527.8,268.3 536.3,263.4 538.5,255.0 541.0,247.0 530.0,240.0" fill="#70ff00"/>
<polygon points="497.0,243.0 494.9,251.9 497.3,258.0 504.6,262.8 515.6,264.3 526.6,262.2 532.7,258.0 534.5,253.0 535.0,246.0 520.0,240.0" fill="#e3ff00"/>
<polygon points="498.0,246.0 503.4,254.3 510.7,258.6 519.3,259.8 526.6,258.6 531.5,254.3 533.0,249.0 520.0,240.0" fill="#ffa600"/>
<polygon points="506.0,250.0 512.0,255.5 519.3,256.1 525.4,254.9 528.0,251.0 520.0,245.0" fill="#ff3300"/>
</g>
<path d="M131.0 73.35H324.7L495.1 243.5" stroke="rgba(0,150,110,0.35)" stroke-width="1" fill="none"/>
<path d="M131.0 158.6L409.8 158.6 M131.0 243.7L495.0 243.7 M546.2 243.5L818.7 243.7 M131.0 328.8L818.7 328.8 M154.3 73.5L154.3 413.9 M239.5 73.5L239.5 413.9 M324.7 73.5L324.7 413.9 M409.8 158.6L409.8 413.9 M495.0 243.7L495.0 413.9 M580.2 243.7L580.2 413.9 M665.4 243.7L665.4 413.9 M750.6 243.7L750.6 413.9 M367.2 201.1L452.4 201.1 M367.2 201.1L367.2 286.2 M324.7 158.6L367.2 201.1 M367.2 286.2L622.8 286.2 M324.7 328.8L367.2 286.2 M452.4 201.1L452.4 371.4 M537.6 265.0L537.6 371.4 M452.4 371.4L537.6 371.4 M409.8 413.9L452.4 371.4 M537.6 371.4L580.2 413.9 M622.8 243.7L622.8 286.2 M622.8 286.2L665.4 328.8 M409.8 201.1L431.1 222.4 M431.1 222.4L473.7 222.4 M431.1 222.4L431.1 265.0 M409.8 286.2L431.1 265.0 M431.1 265.0L558.9 265.0 M473.7 222.4L473.7 307.5 M473.7 307.5L516.3 307.5 M516.7 253.9L516.3 265.0 M516.3 265.0L516.3 307.5 M452.4 328.8L473.7 307.5 M516.3 307.5L537.6 328.8 M558.9 243.7L558.9 265.0 M558.9 265.0L580.2 286.2 M546.2 243.5L558.9 265.0 M540.1 248.5L537.6 265.0 M532.3 251.9L537.6 265.0 M524.8 253.9L527.0 265.0 M452.4 222.4L463.1 233.1 M463.1 233.1L484.4 233.1 M463.1 233.1L463.1 254.3 M463.1 254.3L495.0 254.3 M452.4 265.0L463.1 254.3 M484.4 233.1L484.4 275.6 M484.4 275.6L527.0 275.6 M473.7 286.2L484.4 275.6 M505.7 265.0L505.7 275.6 M527.0 265.0L527.0 275.6 M495.0 286.2L505.7 275.6 M505.7 275.6L516.3 286.2 M527.0 275.6L537.6 286.2 M495.0 254.3L503.8 256.2 M503.8 256.2L510.9 258.6 M500.9 248.5L503.8 256.2 M508.2 252.1L510.9 258.6 M503.8 256.2L495.0 265.0 M510.9 258.6L505.7 265.0 M510.9 258.6L516.3 265.0" stroke="rgba(0,110,40,0.55)" stroke-width="0.9" fill="none"/>
<defs><clipPath id="lb"><polygon points="130.0,232.5 133.0,232.5 133.0,230.0 210.0,230.0 210.0,227.0 311.3,227.3 311.3,225.0 324.5,225.0 332.8,232.8 342.7,231.5 366.8,227.3 386.6,223.0 409.6,215.2 420.0,220.6 428.0,223.5 431.0,222.0 436.6,215.6 443.9,210.7 452.4,207.0 459.0,205.0 480.0,60.0 130.0,60.0"/></clipPath></defs>
<g clip-path="url(#bd)"><g clip-path="url(#lb)"><polygon points="130.0,232.5 133.0,232.5 133.0,230.0 210.0,230.0 210.0,227.0 311.3,227.3 311.3,225.0 324.5,225.0 332.8,232.8 342.7,231.5 366.8,227.3 386.6,223.0 409.6,215.2 420.0,220.6 428.0,223.5 431.0,222.0 436.6,215.6 443.9,210.7 452.4,207.0 459.0,205.0 480.0,60.0 130.0,60.0" fill="#00a7ff"/><polygon points="130.0,163.4 135.0,163.4 135.0,159.0 215.0,159.0 215.0,156.5 263.8,156.5 263.8,158.0 324.5,158.0 324.5,159.5 360.4,159.5 360.4,162.0 416.0,162.0 430.0,60.0 130.0,60.0" fill="#002aff"/><rect x="131.0" y="73.65" width="193.7" height="0.9" fill="#0000ff"/>
<path d="M131.0 158.6L409.8 158.6 M131.0 243.7L495.0 243.7 M546.2 243.5L818.7 243.7 M131.0 328.8L818.7 328.8 M154.3 73.5L154.3 413.9 M239.5 73.5L239.5 413.9 M324.7 73.5L324.7 413.9 M409.8 158.6L409.8 413.9 M495.0 243.7L495.0 413.9 M580.2 243.7L580.2 413.9 M665.4 243.7L665.4 413.9 M750.6 243.7L750.6 413.9 M367.2 201.1L452.4 201.1 M367.2 201.1L367.2 286.2 M324.7 158.6L367.2 201.1 M367.2 286.2L622.8 286.2 M324.7 328.8L367.2 286.2 M452.4 201.1L452.4 371.4 M537.6 265.0L537.6 371.4 M452.4 371.4L537.6 371.4 M409.8 413.9L452.4 371.4 M537.6 371.4L580.2 413.9 M622.8 243.7L622.8 286.2 M622.8 286.2L665.4 328.8 M409.8 201.1L431.1 222.4 M431.1 222.4L473.7 222.4 M431.1 222.4L431.1 265.0 M409.8 286.2L431.1 265.0 M431.1 265.0L558.9 265.0 M473.7 222.4L473.7 307.5 M473.7 307.5L516.3 307.5 M516.7 253.9L516.3 265.0 M516.3 265.0L516.3 307.5 M452.4 328.8L473.7 307.5 M516.3 307.5L537.6 328.8 M558.9 243.7L558.9 265.0 M558.9 265.0L580.2 286.2 M546.2 243.5L558.9 265.0 M540.1 248.5L537.6 265.0 M532.3 251.9L537.6 265.0 M524.8 253.9L527.0 265.0 M452.4 222.4L463.1 233.1 M463.1 233.1L484.4 233.1 M463.1 233.1L463.1 254.3 M463.1 254.3L495.0 254.3 M452.4 265.0L463.1 254.3 M484.4 233.1L484.4 275.6 M484.4 275.6L527.0 275.6 M473.7 286.2L484.4 275.6 M505.7 265.0L505.7 275.6 M527.0 265.0L527.0 275.6 M495.0 286.2L505.7 275.6 M505.7 275.6L516.3 286.2 M527.0 275.6L537.6 286.2 M495.0 254.3L503.8 256.2 M503.8 256.2L510.9 258.6 M500.9 248.5L503.8 256.2 M508.2 252.1L510.9 258.6 M503.8 256.2L495.0 265.0 M510.9 258.6L505.7 265.0 M510.9 258.6L516.3 265.0" stroke="rgba(0,150,150,0.75)" stroke-width="0.9" fill="none"/></g></g>
<path d="M495.1 219.2V243.5M495.1 243.5H518.8" stroke="#9a9a9a" stroke-width="1.1" fill="none"/>
<g fill="#ff0000"><rect x="153.2" y="72.4" width="2.1" height="2.1" rx="0.5"/><rect x="153.2" y="72.5" width="2.1" height="2.1" rx="0.5"/><rect x="153.2" y="157.5" width="2.1" height="2.1" rx="0.5"/><rect x="153.2" y="242.6" width="2.1" height="2.1" rx="0.5"/><rect x="153.2" y="327.8" width="2.1" height="2.1" rx="0.5"/><rect x="153.2" y="412.8" width="2.1" height="2.1" rx="0.5"/><rect x="153.2" y="412.9" width="2.1" height="2.1" rx="0.5"/><rect x="238.4" y="72.4" width="2.1" height="2.1" rx="0.5"/><rect x="238.4" y="157.5" width="2.1" height="2.1" rx="0.5"/><rect x="238.4" y="242.6" width="2.1" height="2.1" rx="0.5"/><rect x="238.4" y="327.8" width="2.1" height="2.1" rx="0.5"/><rect x="238.4" y="412.9" width="2.1" height="2.1" rx="0.5"/><rect x="238.4" y="72.5" width="2.1" height="2.1" rx="0.5"/><rect x="238.4" y="412.8" width="2.1" height="2.1" rx="0.5"/><rect x="323.6" y="72.4" width="2.1" height="2.1" rx="0.5"/><rect x="323.6" y="157.5" width="2.1" height="2.1" rx="0.5"/><rect x="323.6" y="242.6" width="2.1" height="2.1" rx="0.5"/><rect x="323.6" y="327.8" width="2.1" height="2.1" rx="0.5"/><rect x="323.6" y="412.9" width="2.1" height="2.1" rx="0.5"/><rect x="323.6" y="72.5" width="2.1" height="2.1" rx="0.5"/><rect x="323.6" y="157.5" width="2.1" height="2.1" rx="0.5"/><rect x="323.6" y="327.8" width="2.1" height="2.1" rx="0.5"/><rect x="323.6" y="412.8" width="2.1" height="2.1" rx="0.5"/><rect x="366.1" y="200.0" width="2.1" height="2.1" rx="0.5"/><rect x="366.1" y="242.6" width="2.1" height="2.1" rx="0.5"/><rect x="366.1" y="285.1" width="2.1" height="2.1" rx="0.5"/><rect x="408.8" y="157.5" width="2.1" height="2.1" rx="0.5"/><rect x="408.8" y="200.0" width="2.1" height="2.1" rx="0.5"/><rect x="408.8" y="242.6" width="2.1" height="2.1" rx="0.5"/><rect x="408.8" y="285.1" width="2.1" height="2.1" rx="0.5"/><rect x="408.8" y="327.8" width="2.1" height="2.1" rx="0.5"/><rect x="408.8" y="412.8" width="2.1" height="2.1" rx="0.5"/><rect x="408.8" y="157.5" width="2.1" height="2.1" rx="0.5"/><rect x="408.8" y="242.6" width="2.1" height="2.1" rx="0.5"/><rect x="408.8" y="327.8" width="2.1" height="2.1" rx="0.5"/><rect x="408.8" y="412.9" width="2.1" height="2.1" rx="0.5"/><rect x="430.1" y="221.3" width="2.1" height="2.1" rx="0.5"/><rect x="430.1" y="242.6" width="2.1" height="2.1" rx="0.5"/><rect x="430.1" y="263.9" width="2.1" height="2.1" rx="0.5"/><rect x="451.3" y="200.0" width="2.1" height="2.1" rx="0.5"/><rect x="451.3" y="221.3" width="2.1" height="2.1" rx="0.5"/><rect x="451.3" y="242.6" width="2.1" height="2.1" rx="0.5"/><rect x="451.3" y="263.9" width="2.1" height="2.1" rx="0.5"/><rect x="451.3" y="285.1" width="2.1" height="2.1" rx="0.5"/><rect x="451.3" y="327.8" width="2.1" height="2.1" rx="0.5"/><rect x="451.3" y="370.3" width="2.1" height="2.1" rx="0.5"/><rect x="462.1" y="232.0" width="2.1" height="2.1" rx="0.5"/><rect x="462.1" y="242.6" width="2.1" height="2.1" rx="0.5"/><rect x="462.1" y="253.2" width="2.1" height="2.1" rx="0.5"/><rect x="472.6" y="221.3" width="2.1" height="2.1" rx="0.5"/><rect x="472.6" y="232.0" width="2.1" height="2.1" rx="0.5"/><rect x="472.6" y="242.6" width="2.1" height="2.1" rx="0.5"/><rect x="472.6" y="253.2" width="2.1" height="2.1" rx="0.5"/><rect x="472.6" y="263.9" width="2.1" height="2.1" rx="0.5"/><rect x="472.6" y="285.1" width="2.1" height="2.1" rx="0.5"/><rect x="472.6" y="306.4" width="2.1" height="2.1" rx="0.5"/><rect x="483.3" y="232.0" width="2.1" height="2.1" rx="0.5"/><rect x="483.3" y="242.6" width="2.1" height="2.1" rx="0.5"/><rect x="483.3" y="253.2" width="2.1" height="2.1" rx="0.5"/><rect x="483.3" y="263.9" width="2.1" height="2.1" rx="0.5"/><rect x="483.3" y="274.6" width="2.1" height="2.1" rx="0.5"/><rect x="493.9" y="242.6" width="2.1" height="2.1" rx="0.5"/><rect x="493.9" y="253.2" width="2.1" height="2.1" rx="0.5"/><rect x="493.9" y="263.9" width="2.1" height="2.1" rx="0.5"/><rect x="493.9" y="274.6" width="2.1" height="2.1" rx="0.5"/><rect x="493.9" y="285.1" width="2.1" height="2.1" rx="0.5"/><rect x="493.9" y="306.4" width="2.1" height="2.1" rx="0.5"/><rect x="493.9" y="327.8" width="2.1" height="2.1" rx="0.5"/><rect x="493.9" y="370.3" width="2.1" height="2.1" rx="0.5"/><rect x="493.9" y="412.8" width="2.1" height="2.1" rx="0.5"/><rect x="494.0" y="242.6" width="2.1" height="2.1" rx="0.5"/><rect x="494.0" y="327.8" width="2.1" height="2.1" rx="0.5"/><rect x="494.0" y="412.9" width="2.1" height="2.1" rx="0.5"/><rect x="494.1" y="242.4" width="2.1" height="2.1" rx="0.5"/><rect x="499.8" y="247.4" width="2.1" height="2.1" rx="0.5"/><rect x="502.8" y="255.1" width="2.1" height="2.1" rx="0.5"/><rect x="504.6" y="263.9" width="2.1" height="2.1" rx="0.5"/><rect x="504.6" y="274.6" width="2.1" height="2.1" rx="0.5"/><rect x="507.1" y="251.0" width="2.1" height="2.1" rx="0.5"/><rect x="509.8" y="257.6" width="2.1" height="2.1" rx="0.5"/><rect x="515.2" y="263.9" width="2.1" height="2.1" rx="0.5"/><rect x="515.2" y="274.6" width="2.1" height="2.1" rx="0.5"/><rect x="515.2" y="285.1" width="2.1" height="2.1" rx="0.5"/><rect x="515.2" y="306.4" width="2.1" height="2.1" rx="0.5"/><rect x="515.7" y="252.8" width="2.1" height="2.1" rx="0.5"/><rect x="523.8" y="252.8" width="2.1" height="2.1" rx="0.5"/><rect x="526.0" y="263.9" width="2.1" height="2.1" rx="0.5"/><rect x="526.0" y="274.6" width="2.1" height="2.1" rx="0.5"/><rect x="531.2" y="250.8" width="2.1" height="2.1" rx="0.5"/><rect x="536.6" y="263.9" width="2.1" height="2.1" rx="0.5"/><rect x="536.6" y="285.1" width="2.1" height="2.1" rx="0.5"/><rect x="536.6" y="327.8" width="2.1" height="2.1" rx="0.5"/><rect x="536.6" y="370.3" width="2.1" height="2.1" rx="0.5"/><rect x="539.1" y="247.4" width="2.1" height="2.1" rx="0.5"/><rect x="545.2" y="242.4" width="2.1" height="2.1" rx="0.5"/><rect x="557.9" y="242.6" width="2.1" height="2.1" rx="0.5"/><rect x="557.9" y="263.9" width="2.1" height="2.1" rx="0.5"/><rect x="579.2" y="242.6" width="2.1" height="2.1" rx="0.5"/><rect x="579.2" y="242.6" width="2.1" height="2.1" rx="0.5"/><rect x="579.2" y="285.1" width="2.1" height="2.1" rx="0.5"/><rect x="579.2" y="327.8" width="2.1" height="2.1" rx="0.5"/><rect x="579.2" y="412.8" width="2.1" height="2.1" rx="0.5"/><rect x="579.2" y="412.9" width="2.1" height="2.1" rx="0.5"/><rect x="621.8" y="242.6" width="2.1" height="2.1" rx="0.5"/><rect x="621.8" y="285.1" width="2.1" height="2.1" rx="0.5"/><rect x="664.3" y="242.6" width="2.1" height="2.1" rx="0.5"/><rect x="664.3" y="327.8" width="2.1" height="2.1" rx="0.5"/><rect x="664.3" y="412.9" width="2.1" height="2.1" rx="0.5"/><rect x="664.4" y="242.6" width="2.1" height="2.1" rx="0.5"/><rect x="664.4" y="327.8" width="2.1" height="2.1" rx="0.5"/><rect x="664.4" y="412.8" width="2.1" height="2.1" rx="0.5"/><rect x="749.5" y="242.6" width="2.1" height="2.1" rx="0.5"/><rect x="749.5" y="327.8" width="2.1" height="2.1" rx="0.5"/><rect x="749.5" y="412.9" width="2.1" height="2.1" rx="0.5"/><rect x="749.6" y="242.6" width="2.1" height="2.1" rx="0.5"/><rect x="749.6" y="412.8" width="2.1" height="2.1" rx="0.5"/></g>
<rect x="160.8" y="78.5" width="18" height="11.3" fill="#ff3300"/>
<rect x="160.8" y="90.5" width="18" height="11.3" fill="#ffa600"/>
<rect x="160.8" y="102.5" width="18" height="11.3" fill="#e3ff00"/>
<rect x="160.8" y="114.5" width="18" height="11.3" fill="#70ff00"/>
<rect x="160.8" y="126.5" width="18" height="11.3" fill="#00ff04"/>
<rect x="160.8" y="138.5" width="18" height="11.3" fill="#00ff76"/>
<rect x="160.8" y="150.5" width="18" height="11.3" fill="#00ffea"/>
<rect x="160.8" y="162.5" width="18" height="11.3" fill="#00a7ff"/>
<rect x="160.8" y="174.5" width="18" height="11.3" fill="#002aff"/>
<g><path d="M782.9 389.9V372.4" stroke="#00ff00" stroke-width="3"/><path d="M779.6 373L782.9 367.2L786.2 373Z" fill="#00ff00"/><path d="M782.9 389.9H799.6" stroke="#ff0000" stroke-width="2.9"/><path d="M799.2 386.6L805.4 389.9L799.2 393.2Z" fill="#ff0000"/><circle cx="782.9" cy="389.9" r="3.2" fill="#0000f0"/><circle cx="792.1" cy="380.9" r="3" fill="#40ffff"/></g>
</svg>
<span id="t0" class="t" style="left:330.3px;top:1.82px;font:8.8px/10.56px 'Liberation Sans',sans-serif;color:#303030;letter-spacing:-0.083px;">160517_fw_strraise_toegroove.liml - LISA</span>
<span id="t1" class="t" style="left:8.8px;top:17.26px;font:7.4px/8.88px 'Liberation Sans',sans-serif;color:#2a2a2a;letter-spacing:-0.255px;">File</span>
<span id="t2" class="t" style="left:31.2px;top:17.26px;font:7.4px/8.88px 'Liberation Sans',sans-serif;color:#2a2a2a;letter-spacing:-0.237px;">Edit</span>
<span id="t3" class="t" style="left:54.4px;top:17.26px;font:7.4px/8.88px 'Liberation Sans',sans-serif;color:#2a2a2a;letter-spacing:-0.148px;">View</span>
<span id="t4" class="t" style="left:81.2px;top:17.26px;font:7.4px/8.88px 'Liberation Sans',sans-serif;color:#939393;letter-spacing:-0.085px;">Mesh tools</span>
<span id="t5" class="t" style="left:127.8px;top:17.26px;font:7.4px/8.88px 'Liberation Sans',sans-serif;color:#2a2a2a;letter-spacing:-0.053px;">Tools</span>
<span id="t6" class="t" style="left:156.5px;top:17.26px;font:7.4px/8.88px 'Liberation Sans',sans-serif;color:#2a2a2a;letter-spacing:-0.251px;">Help</span>
<span id="t7" class="t" style="left:3px;top:427.06px;font:7.4px/8.88px 'Liberation Sans',sans-serif;color:#333;letter-spacing:-0.036px;">Solved at 2016-05-17T14:36:51.4</span>
<span id="t8" class="t" style="left:26.7px;top:61.36px;font:6.9px/8.28px 'Liberation Sans',sans-serif;color:#333;letter-spacing:-0.264px;">Analysis &lt;Static 2D&gt;</span>
<span id="t9" class="t" style="left:26.7px;top:70.96px;font:6.9px/8.28px 'Liberation Sans',sans-serif;color:#333;letter-spacing:-0.396px;">Geometry</span>
<span id="t10" class="t" style="left:26.7px;top:80.56px;font:6.9px/8.28px 'Liberation Sans',sans-serif;color:#333;letter-spacing:-0.339px;">Components &amp; Materials</span>
<span id="t11" class="t" style="left:38.6px;top:90.16px;font:6.9px/8.28px 'Liberation Sans',sans-serif;color:#333;letter-spacing:-0.290px;">Default &lt;102 elements&gt;</span>
<span id="t12" class="t" style="left:50.1px;top:99.76px;font:6.9px/8.28px 'Liberation Sans',sans-serif;color:#333;letter-spacing:-0.327px;">Material</span>
<span id="t13" class="t" style="left:26.7px;top:109.36px;font:6.9px/8.28px 'Liberation Sans',sans-serif;color:#333;letter-spacing:-0.270px;">Named Selections</span>
<span id="t14" class="t" style="left:38.6px;top:118.96px;font:6.9px/8.28px 'Liberation Sans',sans-serif;color:#333;letter-spacing:-0.325px;">Unnamed(3) &lt;13 nodes&gt;</span>
<span id="t15" class="t" style="left:38.6px;top:128.56px;font:6.9px/8.28px 'Liberation Sans',sans-serif;color:#333;letter-spacing:-0.274px;">Unnamed &lt;2 faces&gt;</span>
<span id="t16" class="t" style="left:38.6px;top:138.16px;font:6.9px/8.28px 'Liberation Sans',sans-serif;color:#333;letter-spacing:-0.304px;">Unnamed(2) &lt;2 faces&gt;</span>
<span id="t17" class="t" style="left:26.7px;top:147.76px;font:6.9px/8.28px 'Liberation Sans',sans-serif;color:#333;letter-spacing:-0.340px;">Loads &amp; Constraints</span>
<span id="t18" class="t" style="left:38px;top:157.36px;font:6.9px/8.28px 'Liberation Sans',sans-serif;color:#333;letter-spacing:-0.226px;">force</span>
<span id="t19" class="t" style="left:38px;top:166.96px;font:6.9px/8.28px 'Liberation Sans',sans-serif;color:#333;letter-spacing:-0.226px;">force</span>
<span id="t20" class="t" style="left:38px;top:176.56px;font:6.9px/8.28px 'Liberation Sans',sans-serif;color:#333;letter-spacing:-0.301px;">displacement</span>
<span id="t21" class="t" style="left:38px;top:186.16px;font:6.9px/8.28px 'Liberation Sans',sans-serif;color:#333;letter-spacing:-0.287px;">rotz &lt;13 nodes&gt;</span>
<span id="t22" class="t" style="left:26.7px;top:195.76px;font:6.9px/8.28px 'Liberation Sans',sans-serif;color:#333;letter-spacing:-0.288px;">Solution</span>
<span id="t23" class="t" style="left:38.2px;top:205.36px;font:6.9px/8.28px 'Liberation Sans',sans-serif;color:#333;letter-spacing:-0.378px;">Components</span>
<span id="t24" class="t" style="left:38.2px;top:214.96px;font:6.9px/8.28px 'Liberation Sans',sans-serif;color:#333;letter-spacing:-0.037px;">Table</span>
<span id="t25" class="t" style="left:38.2px;top:224.56px;font:6.9px/8.28px 'Liberation Sans',sans-serif;color:#333;letter-spacing:-0.250px;">Displacement in X</span>
<span id="t26" class="t" style="left:38.2px;top:234.16px;font:6.9px/8.28px 'Liberation Sans',sans-serif;color:#333;letter-spacing:-0.242px;">Displacement in Y</span>
<span id="t27" class="t" style="left:38.2px;top:243.76px;font:6.9px/8.28px 'Liberation Sans',sans-serif;color:#333;letter-spacing:-0.166px;">Rotation about Z</span>
<span id="t28" class="t" style="left:38.2px;top:253.36px;font:6.9px/8.28px 'Liberation Sans',sans-serif;color:#333;letter-spacing:-0.260px;">Stress XX</span>
<span id="t29" class="t" style="left:38.2px;top:262.96px;font:6.9px/8.28px 'Liberation Sans',sans-serif;color:#333;letter-spacing:-0.246px;">Stress YY</span>
<span id="t30" class="t" style="left:38.2px;top:272.56px;font:6.9px/8.28px 'Liberation Sans',sans-serif;color:#333;letter-spacing:-0.260px;">Stress XY</span>
<span id="t31" class="t" style="left:38.2px;top:282.16px;font:6.9px/8.28px 'Liberation Sans',sans-serif;color:#333;letter-spacing:-0.227px;">Tresca Stress</span>
<span id="t32" class="t" style="left:38.2px;top:291.76px;font:6.9px/8.28px 'Liberation Sans',sans-serif;color:#333;letter-spacing:-0.261px;">von Mises Stress</span>
<span id="t33" class="t" style="left:38.2px;top:301.36px;font:6.9px/8.28px 'Liberation Sans',sans-serif;color:#333;letter-spacing:-0.268px;">Principal Stress 1</span>
<span id="t34" class="t" style="left:38.2px;top:310.96px;font:6.9px/8.28px 'Liberation Sans',sans-serif;color:#333;letter-spacing:-0.268px;">Principal Stress 2</span>
<span id="t35" class="t" style="left:38.2px;top:320.56px;font:6.9px/8.28px 'Liberation Sans',sans-serif;color:#333;letter-spacing:-0.266px;">Displacement Magnitude</span>
<span id="t36" class="t" style="left:38.2px;top:330.16px;font:6.9px/8.28px 'Liberation Sans',sans-serif;color:#333;letter-spacing:-0.225px;">Reaction Forces</span>
<span id="t37" class="t" style="left:161px;top:61.6px;font:9px/10.8px 'Liberation Mono',monospace;color:#555;letter-spacing:-0.014px;">von Mises Stress</span>
<span id="t38" class="t" style="left:185.8px;top:74.2px;font:9px/10.8px 'Liberation Mono',monospace;color:rgba(0,0,40,0.66);letter-spacing:-0.102px;">2315</span>
<span id="t39" class="t" style="left:185.8px;top:86.2px;font:9px/10.8px 'Liberation Mono',monospace;color:rgba(0,0,40,0.66);letter-spacing:-0.102px;">2064</span>
<span id="t40" class="t" style="left:185.8px;top:98.2px;font:9px/10.8px 'Liberation Mono',monospace;color:rgba(0,0,40,0.66);letter-spacing:-0.102px;">1814</span>
<span id="t41" class="t" style="left:185.8px;top:110.2px;font:9px/10.8px 'Liberation Mono',monospace;color:rgba(0,0,40,0.66);letter-spacing:-0.102px;">1563</span>
<span id="t42" class="t" style="left:185.8px;top:122.2px;font:9px/10.8px 'Liberation Mono',monospace;color:rgba(0,0,40,0.66);letter-spacing:-0.102px;">1313</span>
<span id="t43" class="t" style="left:185.8px;top:134.2px;font:9px/10.8px 'Liberation Mono',monospace;color:rgba(0,0,40,0.66);letter-spacing:-0.102px;">1063</span>
<span id="t44" class="t" style="left:185.8px;top:146.2px;font:9px/10.8px 'Liberation Mono',monospace;color:rgba(0,0,40,0.66);letter-spacing:-0.103px;">812.1</span>
<span id="t45" class="t" style="left:185.8px;top:158.2px;font:9px/10.8px 'Liberation Mono',monospace;color:rgba(0,0,40,0.66);letter-spacing:-0.103px;">561.6</span>
<span id="t46" class="t" style="left:185.8px;top:170.2px;font:9px/10.8px 'Liberation Mono',monospace;color:rgba(0,0,40,0.66);letter-spacing:-0.103px;">311.2</span>
<span id="t47" class="t" style="left:185.8px;top:182.2px;font:9px/10.8px 'Liberation Mono',monospace;color:rgba(0,0,40,0.66);letter-spacing:-0.103px;">60.78</span>
<span id="t48" class="t" style="left:778px;top:440.54px;font:6.6px/7.92px 'Liberation Sans',sans-serif;color:#fff;letter-spacing:0.297px;">14:38</span>
<span id="t49" class="t" style="left:768.5px;top:450.54px;font:6.6px/7.92px 'Liberation Sans',sans-serif;color:#fff;letter-spacing:0.398px;">17/05/2016</span>
<span id="t50" class="t" style="left:780.7px;top:358.46px;font:6.4px/7.68px 'Liberation Sans',sans-serif;color:#00f000;letter-spacing:0.000px;font-weight:bold;">Y</span>
<span id="t51" class="t" style="left:807.6px;top:386.16px;font:6.4px/7.68px 'Liberation Sans',sans-serif;color:#ff3a10;letter-spacing:0.000px;font-weight:bold;">X</span>
</body></html>
